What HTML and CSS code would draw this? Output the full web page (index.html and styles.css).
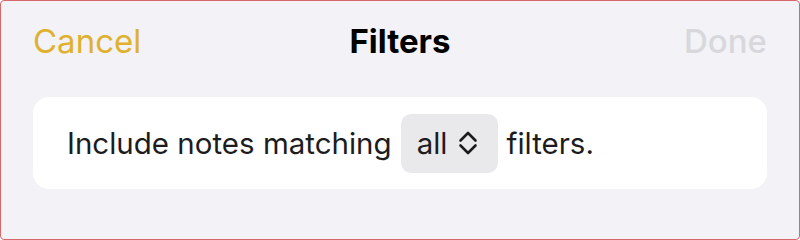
FILE: index.html
```html
<!DOCTYPE html>
<html lang="en">
<head>
    <meta charset="UTF-8">
    <title>Filters</title>
    <link rel="stylesheet" href="styles.css">
</head>
<body>
    <div class="sheet">
        <div class="nav">
            <span class="nav-btn cancel">Cancel</span>
            <span class="nav-title">Filters</span>
            <span class="nav-btn done">Done</span>
        </div>
        <div class="card">
            <span>Include notes matching</span>
            <span class="picker">
                all
                <svg class="chevrons" width="20" height="26" viewBox="0 0 20 26">
                    <path d="M2.5 10.5 L10 3 L17.5 10.5 M2.5 15.5 L10 23 L17.5 15.5" fill="none" stroke="#1c1c1e" stroke-width="2.6" stroke-linecap="round" stroke-linejoin="round"/>
                </svg>
            </span>
            <span>filters.</span>
        </div>
    </div>
</body>
</html>
```

FILE: styles.css
```css
* {
    margin: 0;
    padding: 0;
    box-sizing: border-box;
}

body {
    width: 800px;
    height: 240px;
    font-family: Inter, "Liberation Sans", sans-serif;
    background: #ffffff;
}

.sheet {
    width: 800px;
    height: 240px;
    background: #f2f2f7;
    border: 1px solid #d9686a;
    border-radius: 4px;
    padding: 0 32px;
}

.nav {
    display: flex;
    justify-content: space-between;
    align-items: center;
    height: 80px;
}

.nav-btn {
    font-size: 33px;
    width: 150px;
}

.cancel {
    color: #e0b12f;
}

.done {
    color: #d8d8dc;
    text-align: right;
    font-weight: 500;
}

.nav-title {
    font-size: 33px;
    font-weight: 700;
    color: #000000;
}

.card {
    margin-top: 16px;
    height: 92px;
    background: #ffffff;
    border-radius: 16px;
    display: flex;
    align-items: center;
    padding: 0 34px;
    font-size: 29.5px;
    color: #1c1c1e;
    gap: 9px;
}

.picker {
    display: flex;
    align-items: center;
    gap: 10px;
    height: 59px;
    padding: 0 20px 0 16px;
    background: #e9e9eb;
    border-radius: 10px;
}
```
